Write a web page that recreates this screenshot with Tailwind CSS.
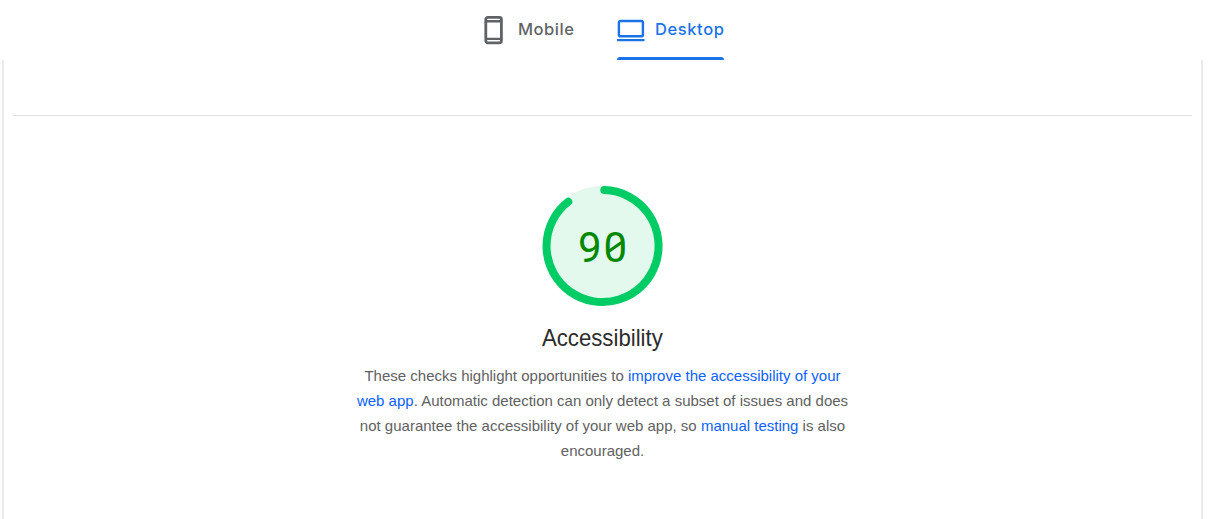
<!DOCTYPE html>
<html lang="en">
<head>
<meta charset="utf-8">
<title>Accessibility</title>
<script src="https://cdn.jsdelivr.net/npm/@tailwindcss/browser@4"></script>
</head>
<body class="bg-white w-[1208px] h-[519px] overflow-hidden font-['Liberation_Sans',sans-serif]">
<div class="flex h-full flex-col">
  <nav class="flex h-[60px] shrink-0 gap-[42px] pl-[484px] font-['Inter',sans-serif] text-[16.5px] font-medium">
    <div class="flex h-[60px] w-[91px] items-center gap-[15px] text-[#5f6368]">
      <svg class="h-[30px] w-[19px] shrink-0" viewBox="0 0 19 30" fill="none" stroke="currentColor">
        <rect x="1.8" y="2.4" width="15.6" height="25.4" rx="2" stroke-width="2.8"/>
        <path d="M1.5 6.3h16M1.5 23.9h16" stroke-width="2.4"/>
      </svg>
      <span class="whitespace-nowrap leading-6 pb-0.5 tracking-[0.55px]">Mobile</span>
    </div>
    <div class="flex h-[60px] w-[107px] flex-col text-[#1a73e8]">
      <div class="flex h-[57px] items-center gap-[10px]">
        <svg class="h-[24px] w-[28px] shrink-0 mt-[5px]" viewBox="0 0 28 24" fill="none" stroke="currentColor">
          <rect x="1.9" y="2" width="24" height="15.3" rx="1.6" stroke-width="2.4"/>
          <path d="M.8 21.2h25.8" stroke-width="2.2" stroke-linecap="round"/>
        </svg>
        <span class="whitespace-nowrap leading-6 pt-px tracking-[0.6px]">Desktop</span>
      </div>
      <div class="h-[3px] w-[107px] rounded-t-[3px] bg-[#1a73e8]"></div>
    </div>
  </nav>
  <main class="ml-[2px] flex w-[1201px] flex-1 flex-col items-center border-x-2 border-[#ebebeb]">
    <div class="mt-[55px] h-px w-[1179px] shrink-0 bg-[#e0e0e0]"></div>
    <svg class="mt-[69px] h-[122px] w-[122px] shrink-0" viewBox="0.5 0 122 122">
      <circle cx="61" cy="61" r="60" fill="#e3f9ee"/>
      <path d="M62.8 5.03A56 56 0 1 1 26.8 16.7" fill="none" stroke="#00cc66" stroke-width="8" stroke-linecap="round"/>
      <text x="36.6 62" y="76.7" font-family="Roboto" font-size="42" fill="#008800">90</text>
      <path d="M67 66.5L80 57.5" stroke="#008800" stroke-width="3"/>
    </svg>
    <h1 class="mt-[13px] h-[36px] origin-center scale-x-[0.925] whitespace-nowrap text-[24px] leading-[36px] text-[#2c2c2c]">Accessibility</h1>
    <p class="mt-[7px] whitespace-nowrap text-center text-[15px] leading-[25px] text-[#616161]">These checks highlight opportunities to <a class="text-[#0c62ff]">improve the accessibility of your<br>web app</a>. Automatic detection can only detect a subset of issues and does<br>not guarantee the accessibility of your web app, so <a class="text-[#0c62ff]">manual testing</a> is also<br>encouraged.</p>
  </main>
</div>
</body>
</html>
